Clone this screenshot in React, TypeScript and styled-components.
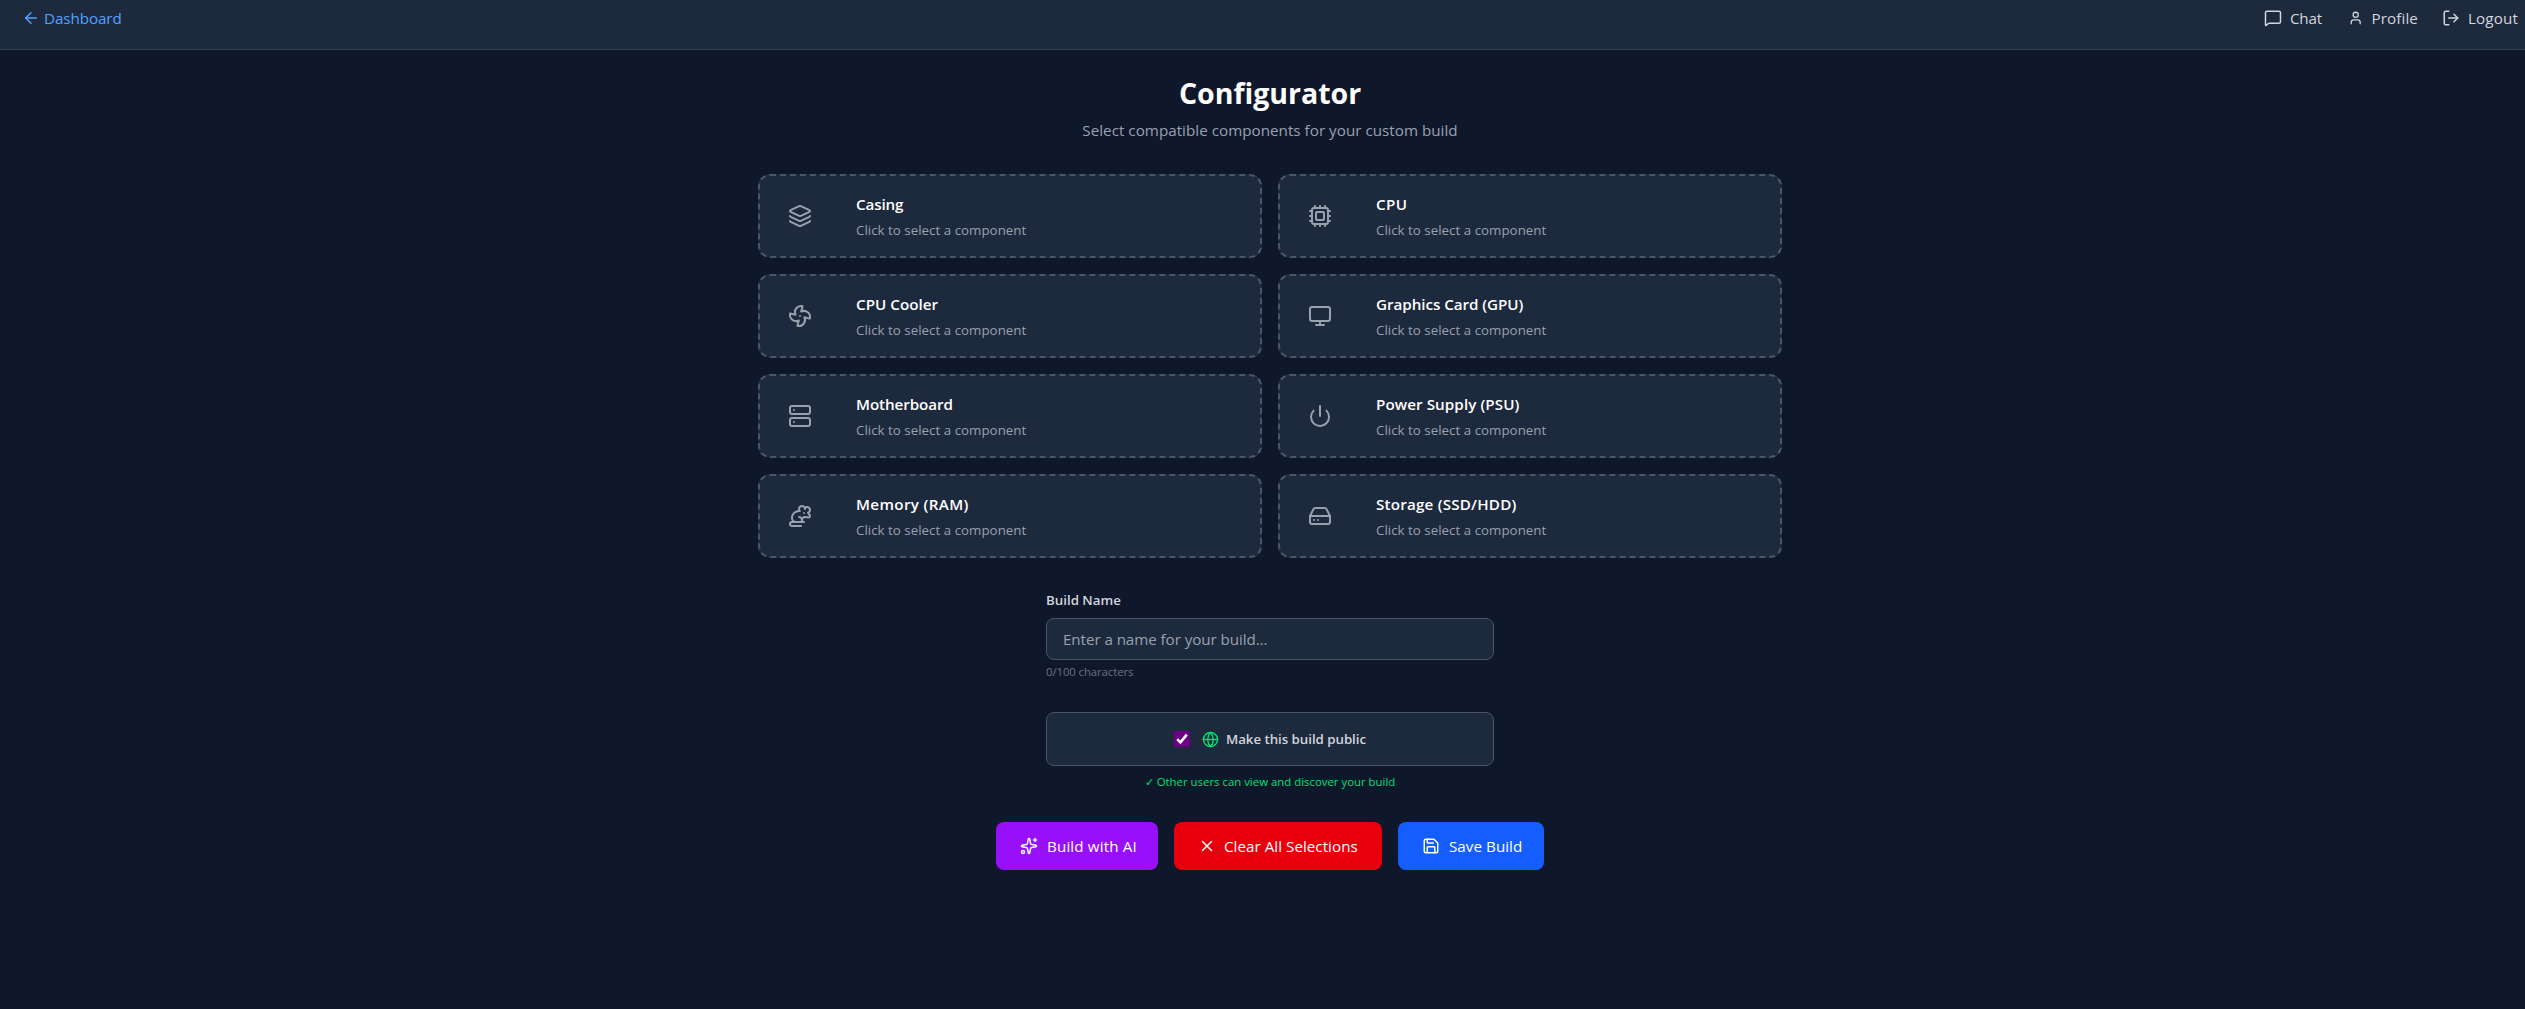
import React from 'react';
import styled, { createGlobalStyle } from 'styled-components';
import {
  ArrowLeft, MessageSquare, User, LogOut, Layers, Cpu, Fan, Monitor, Server, Power, Rat,
  HardDrive, Globe, Sparkles, X, Save, type LucideIcon,
} from 'lucide-react';

const GlobalStyle = createGlobalStyle`
  *, *::before, *::after { box-sizing: border-box; }
  html, body { margin: 0; background: #0f172b; }
  body, button, input { font-family: "Open Sans", "Noto Sans", sans-serif; }
  h1, h2, p { margin: 0; }
`;

const Page = styled.div`
  min-height: 1009px;
  background: #0f172b;
  color: #ffffff;
`;

const Header = styled.header`
  display: flex;
  justify-content: space-between;
  height: 50px;
  padding: 6px 6px 0 22px;
  background: #1d293d;
  border-bottom: 1px solid #364153;
`;

const Nav = styled.nav`
  display: flex;
  gap: 24px;
`;

const NavLink = styled.a<{ $gap: number; $color: string; $width?: number }>`
  display: flex;
  align-items: center;
  gap: ${(p) => p.$gap}px;
  width: ${(p) => (p.$width ? `${p.$width}px` : 'auto')};
  height: 24px;
  color: ${(p) => p.$color};
  font-size: 15.2px;
  line-height: 24px;
  white-space: nowrap;
`;

const Spaced = styled.span<{ $tracking: number }>`
  letter-spacing: ${(p) => p.$tracking}px;
  white-space: nowrap;
`;

const Shell = styled.div`
  padding-left: 15px;
`;

const Main = styled.main`
  width: 1024px;
  margin: 0 auto;
  padding-top: 23px;
  display: flex;
  flex-direction: column;
  align-items: center;
`;

const Title = styled.h1`
  font-size: 28.5px;
  line-height: 40px;
  font-weight: 700;
`;

const Subtitle = styled.p`
  margin-top: 5px;
  font-size: 15.2px;
  line-height: 24px;
  letter-spacing: 0.024px;
  color: #99a1af;
`;

const Grid = styled.section`
  display: grid;
  grid-template-columns: 1fr 1fr;
  gap: 16px;
  width: 100%;
  margin-top: 32px;
`;

const Card = styled.div`
  display: flex;
  align-items: center;
  height: 84px;
  padding-left: 28px;
  border: 2px dashed #4a5565;
  border-radius: 12px;
  background: #1d293d;
`;

const CardIcon = styled.span`
  display: flex;
  width: 68px;
  color: #99a1af;
`;

const CardTitle = styled.h2`
  font-size: 15.2px;
  line-height: 24px;
  font-weight: 600;
`;

const CardHint = styled.p`
  margin-top: 4px;
  font-size: 13.3px;
  line-height: 20px;
  letter-spacing: 0.03px;
  color: #99a1af;
`;

const Form = styled.section`
  display: flex;
  flex-direction: column;
  width: 448px;
  margin-top: 32px;
`;

const Label = styled.label`
  font-size: 13.3px;
  line-height: 20px;
  font-weight: 600;
  color: #d1d5dc;
`;

const NameInput = styled.input`
  height: 42px;
  margin-top: 8px;
  padding: 0 16px;
  border: 1px solid #4a5565;
  border-radius: 8px;
  background: #1d293d;
  color: #ffffff;
  font-size: 15.2px;
  letter-spacing: -0.075px;
  outline: none;
  &::placeholder { color: #99a1af; opacity: 1; }
`;

const Counter = styled.p`
  margin-top: 4px;
  font-size: 11.4px;
  line-height: 16px;
  letter-spacing: -0.1px;
  color: #6a7282;
`;

const PublicBox = styled.div`
  display: flex;
  align-items: center;
  justify-content: center;
  height: 54px;
  margin-top: 32px;
  border: 1px solid #4a5565;
  border-radius: 8px;
  background: #1d293d;
`;

const Checkbox = styled.span`
  display: flex;
  width: 16px;
  height: 16px;
  margin-right: 12px;
  background: #6b0085;
`;

const GlobeIcon = styled(Globe)`
  margin-right: 7px;
  color: #05df72;
`;

const PublicHint = styled.p`
  margin-top: 8px;
  font-size: 11.4px;
  line-height: 16px;
  text-align: center;
  color: #05df72;
`;

const Actions = styled.div`
  display: flex;
  gap: 16px;
  margin-top: 32px;
`;

const Button = styled.button<{ $bg: string; $width: number; $gap?: number }>`
  display: flex;
  align-items: center;
  gap: ${(p) => p.$gap ?? 8}px;
  width: ${(p) => p.$width}px;
  height: 48px;
  padding: 0 0 0 24px;
  border: 0;
  border-radius: 8px;
  background: ${(p) => p.$bg};
  color: #ffffff;
  font-size: 15.2px;
  line-height: 24px;
`;

const parts: { name: string; tracking: number; icon: LucideIcon }[] = [
  { name: 'Casing', tracking: -0.142, icon: Layers },
  { name: 'CPU', tracking: 0.4, icon: Cpu },
  { name: 'CPU Cooler', tracking: 0.018, icon: Fan },
  { name: 'Graphics Card (GPU)', tracking: -0.052, icon: Monitor },
  { name: 'Motherboard', tracking: -0.081, icon: Server },
  { name: 'Power Supply (PSU)', tracking: 0.074, icon: Power },
  { name: 'Memory (RAM)', tracking: 0.347, icon: Rat },
  { name: 'Storage (SSD/HDD)', tracking: 0.197, icon: HardDrive },
];

export default function App() {
  return (
    <Page>
      <GlobalStyle />
      <Header>
        <NavLink $gap={4} $color="#51a2ff">
          <ArrowLeft size={18} />
          <Spaced $tracking={-0.08}>Dashboard</Spaced>
        </NavLink>
        <Nav>
          <NavLink $gap={8} $color="#d1d5dc" $width={60}>
            <MessageSquare size={18} />
            <Spaced $tracking={-0.2}>Chat</Spaced>
          </NavLink>
          <NavLink $gap={8} $color="#d1d5dc" $width={70}>
            <User size={18} />
            <Spaced $tracking={0.12}>Profile</Spaced>
          </NavLink>
          <NavLink $gap={8} $color="#d1d5dc" $width={77}>
            <LogOut size={18} />
            <Spaced $tracking={0.15}>Logout</Spaced>
          </NavLink>
        </Nav>
      </Header>
      <Shell>
        <Main>
          <Title>Configurator</Title>
          <Subtitle>Select compatible components for your custom build</Subtitle>
          <Grid>
            {parts.map(({ name, tracking, icon: Icon }) => (
              <Card key={name}>
                <CardIcon><Icon size={24} /></CardIcon>
                <div>
                  <CardTitle><Spaced $tracking={tracking}>{name}</Spaced></CardTitle>
                  <CardHint>Click to select a component</CardHint>
                </div>
              </Card>
            ))}
          </Grid>
          <Form>
            <Label>Build Name</Label>
            <NameInput placeholder="Enter a name for your build..." />
            <Counter>0/100 characters</Counter>
            <PublicBox>
              <Checkbox>
                <svg width="16" height="16" viewBox="0 0 16 16" fill="none">
                  <path d="M3.2 8.2l3.2 3.2L12.8 3.6" stroke="#fff" strokeWidth="2.6" />
                </svg>
              </Checkbox>
              <GlobeIcon size={17} />
              <Label><Spaced $tracking={-0.04}>Make this build public</Spaced></Label>
            </PublicBox>
            <PublicHint>✓ Other users can view and discover your build</PublicHint>
          </Form>
          <Actions>
            <Button $bg="#9810fa" $width={162} $gap={9}>
              <Sparkles size={18} />
              <Spaced $tracking={0.133}>Build with AI</Spaced>
            </Button>
            <Button $bg="#e7000b" $width={208}>
              <X size={18} />
              <Spaced $tracking={0.03}>Clear All Selections</Spaced>
            </Button>
            <Button $bg="#155dfc" $width={146} $gap={9}>
              <Save size={18} />
              <Spaced $tracking={0.042}>Save Build</Spaced>
            </Button>
          </Actions>
        </Main>
      </Shell>
    </Page>
  );
}
